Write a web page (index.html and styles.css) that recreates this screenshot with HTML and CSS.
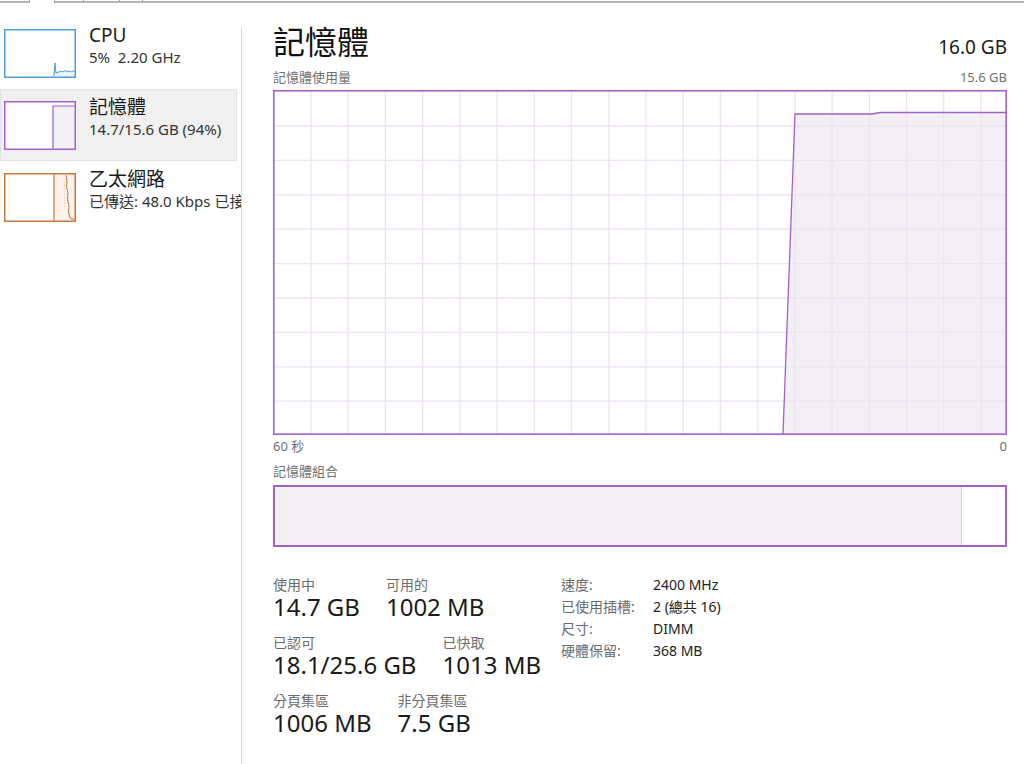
FILE: index.html
```html
<!DOCTYPE html>
<html lang="zh-Hant">
<head>
    <meta charset="UTF-8">
    <meta name="viewport" content="width=device-width, initial-scale=1.0">
    <title>工作管理員 - 效能</title>
    <link rel="stylesheet" href="styles.css">
</head>
<body>
    <div class="tabstrip">
        <span class="tab tab-first"></span>
        <span class="tab-current"></span>
        <span class="tab tab-a"></span>
        <span class="tab tab-b"></span>
        <span class="tab tab-c"></span>
        <span class="tab tab-rest"></span>
    </div>

    <div class="window">
        <aside class="sidebar">
            <div class="perf-item">
                <svg class="thumb" width="72" height="49" viewBox="0 0 72 49">
                    <polygon points="49,47 50,46 51,34 52,44 55,43 57,42 59,43 61,41.5 63,43 65,42 67,43 69,42 71,42 71,48 49,48" fill="#eef5fb"/>
                    <polyline points="49,47 50,46 51,34 52,44 55,43 57,42 59,43 61,41.5 63,43 65,42 67,43 69,42 71,42" fill="none" stroke="#4a9ad6" stroke-width="1"/>
                    <rect x="0.75" y="0.75" width="70.5" height="47.5" fill="none" stroke="#4f9fd9" stroke-width="1.5"/>
                </svg>
                <div class="perf-text">
                    <div class="perf-name">CPU</div>
                    <div class="perf-sub">5%&nbsp; 2.20 GHz</div>
                </div>
            </div>
            <div class="perf-item selected">
                <svg class="thumb" width="72" height="49" viewBox="0 0 72 49">
                    <rect x="49" y="5" width="22" height="43" fill="#f4f1f6"/>
                    <polyline points="49,48 49,5 71,5" fill="none" stroke="#a45fcb" stroke-width="1.2"/>
                    <rect x="0.75" y="0.75" width="70.5" height="47.5" fill="none" stroke="#a760cc" stroke-width="1.5"/>
                </svg>
                <div class="perf-text">
                    <div class="perf-name">記憶體</div>
                    <div class="perf-sub">14.7/15.6 GB (94%)</div>
                </div>
            </div>
            <div class="perf-item">
                <svg class="thumb" width="72" height="49" viewBox="0 0 72 49">
                    <rect x="50" y="1" width="21" height="47" fill="#fcf3ec"/>
                    <line x1="50" y1="1" x2="50" y2="48" stroke="#c9773a" stroke-width="1.2"/>
                    <polyline points="62,2 63,8 62.5,14 64,20 63.5,27 65,33 64.5,39 66,45 68,46 71,46" fill="none" stroke="#c9773a" stroke-width="1"/>
                    <polyline points="60,6 60.5,12 60,18 61,24 60.5,30 61.5,36" fill="none" stroke="#e2b48f" stroke-width="1" stroke-dasharray="1 2"/>
                    <rect x="0.75" y="0.75" width="70.5" height="47.5" fill="none" stroke="#c9773a" stroke-width="1.5"/>
                </svg>
                <div class="perf-text">
                    <div class="perf-name">乙太網路</div>
                    <div class="perf-sub">已傳送: 48.0 Kbps 已接收: 0 Kbps</div>
                </div>
            </div>
        </aside>

        <main class="detail">
            <div class="detail-head">
                <div class="detail-title">記憶體</div>
                <div class="detail-total">16.0 GB</div>
            </div>

            <div class="chart-caption">
                <span>記憶體使用量</span>
                <span>15.6 GB</span>
            </div>
            <svg class="usage-chart" width="734" height="345" viewBox="0 0 734 345">
                <polygon points="510,344 522,24 599,24 607,22.5 733,22.5 733,344" fill="#f2f0f4"/>
                <g stroke="#eee2f3" stroke-width="1.3">
                    <line x1="38" y1="0" x2="38" y2="345"/>
                    <line x1="75.2" y1="0" x2="75.2" y2="345"/>
                    <line x1="112.4" y1="0" x2="112.4" y2="345"/>
                    <line x1="149.7" y1="0" x2="149.7" y2="345"/>
                    <line x1="186.9" y1="0" x2="186.9" y2="345"/>
                    <line x1="224.1" y1="0" x2="224.1" y2="345"/>
                    <line x1="261.3" y1="0" x2="261.3" y2="345"/>
                    <line x1="298.5" y1="0" x2="298.5" y2="345"/>
                    <line x1="335.8" y1="0" x2="335.8" y2="345"/>
                    <line x1="373" y1="0" x2="373" y2="345"/>
                    <line x1="410.2" y1="0" x2="410.2" y2="345"/>
                    <line x1="447.4" y1="0" x2="447.4" y2="345"/>
                    <line x1="484.6" y1="0" x2="484.6" y2="345"/>
                    <line x1="521.9" y1="0" x2="521.9" y2="345"/>
                    <line x1="559.1" y1="0" x2="559.1" y2="345"/>
                    <line x1="596.3" y1="0" x2="596.3" y2="345"/>
                    <line x1="633.5" y1="0" x2="633.5" y2="345"/>
                    <line x1="670.7" y1="0" x2="670.7" y2="345"/>
                    <line x1="708" y1="0" x2="708" y2="345"/>
                    <line x1="0" y1="36" x2="734" y2="36"/>
                    <line x1="0" y1="70.4" x2="734" y2="70.4"/>
                    <line x1="0" y1="104.8" x2="734" y2="104.8"/>
                    <line x1="0" y1="139.2" x2="734" y2="139.2"/>
                    <line x1="0" y1="173.6" x2="734" y2="173.6"/>
                    <line x1="0" y1="208" x2="734" y2="208"/>
                    <line x1="0" y1="242.4" x2="734" y2="242.4"/>
                    <line x1="0" y1="276.8" x2="734" y2="276.8"/>
                    <line x1="0" y1="311.2" x2="734" y2="311.2"/>
                </g>
                <polyline points="510,344 522,24 599,24 607,22.5 733,22.5" fill="none" stroke="#a45fcb" stroke-width="1.3"/>
                <rect x="0.8" y="0.8" width="732.4" height="343.4" fill="none" stroke="#a45fcb" stroke-width="1.6"/>
            </svg>
            <div class="chart-axis">
                <span>60 秒</span>
                <span>0</span>
            </div>

            <div class="chart-caption compo-caption">
                <span>記憶體組合</span>
            </div>
            <div class="compo-bar">
                <div class="compo-used" style="width: 94%"></div>
            </div>

            <div class="stats">
                <div class="stats-main">
                    <div class="stat-row">
                        <div class="stat">
                            <div class="stat-label">使用中</div>
                            <div class="stat-value">14.7 GB</div>
                        </div>
                        <div class="stat">
                            <div class="stat-label">可用的</div>
                            <div class="stat-value">1002 MB</div>
                        </div>
                    </div>
                    <div class="stat-row">
                        <div class="stat">
                            <div class="stat-label">已認可</div>
                            <div class="stat-value">18.1/25.6 GB</div>
                        </div>
                        <div class="stat">
                            <div class="stat-label">已快取</div>
                            <div class="stat-value">1013 MB</div>
                        </div>
                    </div>
                    <div class="stat-row">
                        <div class="stat">
                            <div class="stat-label">分頁集區</div>
                            <div class="stat-value">1006 MB</div>
                        </div>
                        <div class="stat">
                            <div class="stat-label">非分頁集區</div>
                            <div class="stat-value">7.5 GB</div>
                        </div>
                    </div>
                </div>

                <div class="specs">
                    <span class="spec-label">速度:</span><span class="spec-value">2400 MHz</span>
                    <span class="spec-label">已使用插槽:</span><span class="spec-value">2 (總共 16)</span>
                    <span class="spec-label">尺寸:</span><span class="spec-value">DIMM</span>
                    <span class="spec-label">硬體保留:</span><span class="spec-value">368 MB</span>
                </div>
            </div>
        </main>
    </div>
</body>
</html>
```

FILE: styles.css
```css
body {
    margin: 0;
    font-family: "Noto Sans", "Noto Sans CJK TC", sans-serif;
    background-color: #fff;
    color: #1a1a1a;
    overflow: hidden;
}

/* cut-off tab headers at the very top */
.tabstrip {
    display: flex;
    height: 3px;
}

.tab {
    box-sizing: border-box;
    height: 3px;
    border-bottom: 2px solid #b5b5b5;
    border-left: 1px solid #9c9c9c;
}

.tab-first {
    width: 30px;
    border-left: none;
    border-right: 1px solid #9c9c9c;
}

.tab-current {
    width: 24px;
}

.tab-a {
    width: 29px;
}

.tab-b {
    width: 36px;
}

.tab-c {
    width: 23px;
}

.tab-rest {
    flex: 1;
}

.window {
    display: flex;
    height: 761px;
}

/* left list of devices */
.sidebar {
    position: relative;
    width: 242px;
    flex-shrink: 0;
    box-sizing: border-box;
    padding-top: 14px;
    overflow: hidden;
}

.sidebar::after {
    content: "";
    position: absolute;
    top: 25px;
    right: 0;
    bottom: 0;
    width: 1px;
    background-color: #dadada;
}

.perf-item {
    display: flex;
    align-items: flex-start;
    width: 237px;
    height: 72px;
    white-space: nowrap;
}

.perf-item.selected {
    background-color: #f0f0f0;
    box-shadow: inset 0 0 0 1px #e0e0e0;
}

.thumb {
    display: block;
    flex-shrink: 0;
    margin: 12px 13px 0 4px;
    background-color: #fff;
}

.perf-text {
    padding-top: 6px;
}

.perf-name {
    font-size: 19px;
    line-height: 24px;
    color: #1a1a1a;
}

.perf-sub {
    margin-top: 1px;
    font-size: 15px;
    line-height: 18px;
    color: #333;
}

/* right detail pane */
.detail {
    flex: 1;
    min-width: 0;
    padding: 19px 17px 0 31px;
}

.detail-head {
    display: flex;
    justify-content: space-between;
    align-items: baseline;
}

.detail-title {
    font-size: 32px;
    line-height: 40px;
    color: #111;
}

.detail-total {
    font-size: 19px;
    color: #1a1a1a;
}

.chart-caption,
.chart-axis {
    display: flex;
    justify-content: space-between;
    font-size: 13px;
    line-height: 18px;
    color: #707070;
}

.chart-caption {
    margin-top: 6px;
}

.usage-chart {
    display: block;
    margin-top: 4px;
}

.chart-axis {
    margin-top: 2px;
}

.compo-caption {
    margin-top: 7px;
}

.compo-bar {
    display: flex;
    box-sizing: border-box;
    height: 62px;
    margin-top: 5px;
    border: 2px solid #a45fcb;
}

.compo-used {
    background-color: #f2f0f4;
    border-right: 1px solid #dcc7e6;
}

.stats {
    display: flex;
    align-items: flex-start;
    margin-top: 29px;
}

.stats-main {
    width: 288px;
    flex-shrink: 0;
}

.stat-row {
    display: flex;
    gap: 26px;
    margin-bottom: 14px;
    white-space: nowrap;
}

.stat-label {
    font-size: 14px;
    line-height: 18px;
    color: #6b6b6b;
}

.stat-value {
    font-size: 24px;
    line-height: 26px;
    color: #1a1a1a;
}

.specs {
    display: grid;
    grid-template-columns: 92px auto;
    margin-top: -2px;
    font-size: 14px;
    line-height: 22px;
    white-space: nowrap;
}

.spec-label {
    color: #6b6b6b;
}

.spec-value {
    color: #222;
}
```
